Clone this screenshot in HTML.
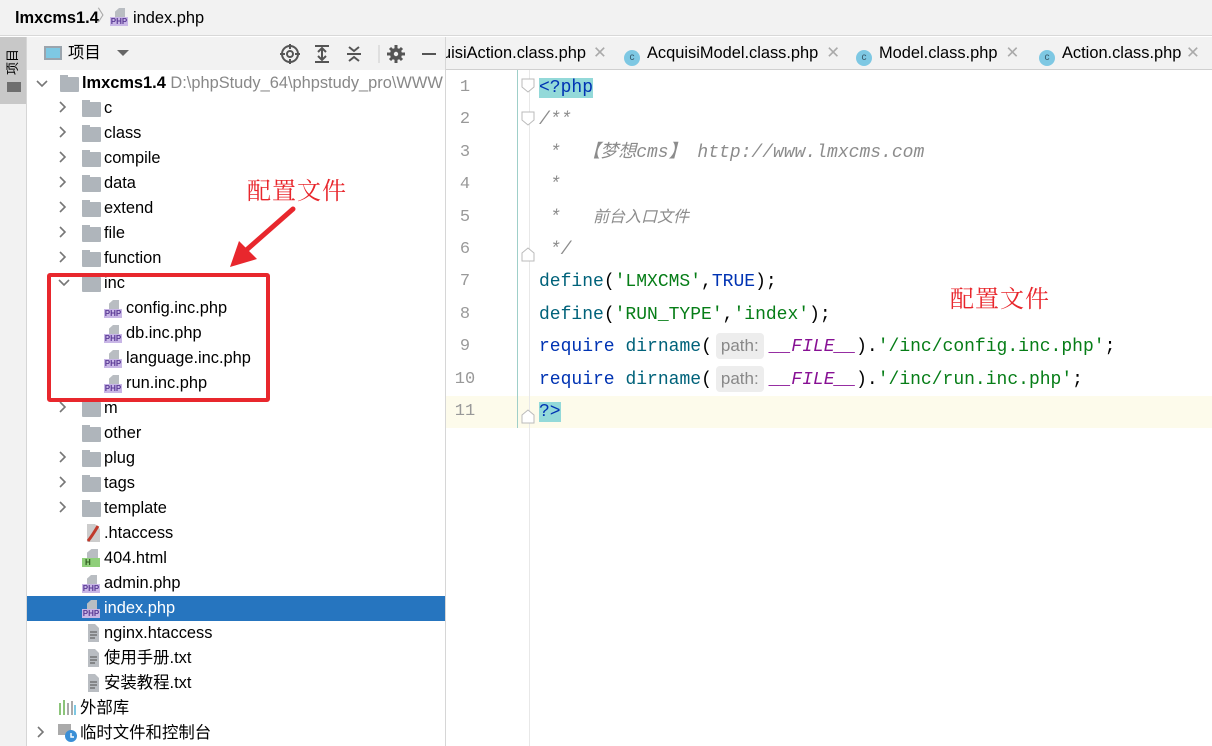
<!DOCTYPE html>
<html><head><meta charset="utf-8"><style>
*{margin:0;padding:0;box-sizing:border-box}
body{width:1212px;height:746px;overflow:hidden;background:#fff;font-family:"Liberation Sans","Noto Sans CJK SC",sans-serif;position:relative;color:#000}
.a{position:absolute;white-space:nowrap}
.t{font-size:16.4px;line-height:25px;height:25px}
.fd{position:absolute;width:19px;height:15px;background:#afb5bb;border-radius:1px}
.fd:before{content:"";position:absolute;left:0;top:-2px;width:8px;height:3px;background:#afb5bb}
.php{position:absolute;width:18px;height:18px}
.php .pg{position:absolute;left:5px;top:0;width:10px;height:9px;background:#b9bdc2;clip-path:polygon(40% 0,100% 0,100% 100%,0 100%,0 40%)}
.php .pl{position:absolute;left:0;top:9px;width:18px;height:9px;background:#c8b6e6;color:#5b3b96;font:bold 8px/9px "Liberation Sans",sans-serif;text-align:center}
.code{position:absolute;left:539px;font-family:"Liberation Mono",monospace;font-size:18px;line-height:32px;height:32px;white-space:pre}
.ln{position:absolute;left:445px;width:40px;text-align:center;font-family:"Liberation Mono",monospace;font-size:17px;color:#999;line-height:32px}
.kw{color:#0033b3}.fn{color:#00627a}.st{color:#067d17}.cm{color:#8c8c8c;font-style:italic}.mc{color:#871094;font-style:italic}
.hint{display:inline-block;background:#ededed;color:#888;font-family:"Liberation Sans",sans-serif;font-size:17px;line-height:26px;padding:0 5px;border-radius:4px;margin:0 6px 0 4px}
.tab{position:absolute;top:36px;height:34px;line-height:34px;font-size:16.4px;white-space:nowrap}
.ci{display:inline-block;width:16px;height:16px;border-radius:50%;background:#7ec8e3;color:#35586a;font-size:10px;line-height:16px;text-align:center;vertical-align:-2px;margin-right:7px}
.x{color:#aaa;margin-left:8px}
</style></head><body>
<div class="a" style="left:0;top:0;width:1212px;height:36px;background:#f2f2f2;border-bottom:1px solid #d8d8d8"></div>
<div class="a" style="left:15px;top:7px;font-size:16.4px;font-weight:bold;line-height:22px">lmxcms1.4</div>
<div class="a" style="left:97px;top:6px;font-size:16px;color:#aaa;line-height:22px">〉</div>
<div class="php" style="left:110px;top:8px"><div class="pg"></div><div class="pl">PHP</div></div>
<div class="a" style="left:133px;top:7px;font-size:16.4px;line-height:22px">index.php</div>
<div class="a" style="left:0;top:37px;width:27px;height:709px;background:#f2f2f2;border-right:1px solid #d6d6d6"></div>
<div class="a" style="left:0;top:37px;width:26px;height:67px;background:#c8c8c8"></div>
<div class="a" style="font-size:13px;line-height:14px;transform:rotate(-90deg);transform-origin:center;width:28px;left:-1px;top:54px">项目</div>
<div class="a" style="left:7px;top:82px;width:14px;height:10px;background:#6e6e6e"></div>
<div class="a" style="left:27px;top:37px;width:418px;height:33px;background:#f2f2f2"></div>
<div class="a" style="left:44px;top:46px;width:18px;height:14px;border:2px solid #9aa4ad;background:#7ec8e3"></div>
<div class="a" style="left:68px;top:41px;font-size:16.4px;line-height:24px">项目</div>
<div class="a" style="left:117px;top:50px;width:0;height:0;border-left:6px solid transparent;border-right:6px solid transparent;border-top:6px solid #666"></div>
<svg class="a" style="left:279px;top:43px" width="160" height="22" viewBox="0 0 160 22" fill="none" stroke="#555" stroke-width="2">
<circle cx="11" cy="11" r="8"/><circle cx="11" cy="11" r="3"/><path d="M11 1v5M11 16v5M1 11h5M16 11h5"/>
<path d="M36 3h14M36 19h14M43 6v10M39 9l4-4 4 4M39 13l4 4 4-4"/>
<path d="M68 11h14M70 4l5 4 5-4M70 18l5-4 5 4"/>
<line x1="100" y1="2" x2="100" y2="20" stroke="#ccc" stroke-width="1"/>
<circle cx="117" cy="11" r="6" fill="#555" stroke="none"/><path d="M117 2v18M108 11h18M111 5l12 12M123 5l-12 12" stroke-width="3"/><circle cx="117" cy="11" r="2.2" fill="#f2f2f2" stroke="none"/>
<path d="M143 11h14"/>
</svg>
<div class="a" style="left:445px;top:37px;width:1px;height:709px;background:#d6d6d6"></div>
<div class="a" style="left:27px;top:596px;width:418px;height:25px;background:#2675bf"></div>
<svg class="a" style="left:34px;top:74px" width="60" height="670" fill="none" stroke="#777" stroke-width="1.6">
<path d="M3 7l5 5 5-5"/>
<path d="M26 28l5 5-5 5M26 53l5 5-5 5M26 78l5 5-5 5M26 103l5 5-5 5M26 128l5 5-5 5M26 153l5 5-5 5M26 178l5 5-5 5"/>
<path d="M25 206l5 5 5-5"/>
<path d="M26 328l5 5-5 5M26 378l5 5-5 5M26 403l5 5-5 5M26 428l5 5-5 5"/>
<path d="M4 653l5 5-5 5"/>
</svg>
<div class="fd" style="left:60px;top:77px"></div>
<div class="a t" style="left:82px;top:71px"><b>lmxcms1.4</b> <span style="color:#888">D:\phpStudy_64\phpstudy_pro\WWW</span></div>
<div class="fd" style="left:82px;top:102px"></div><div class="a t" style="left:104px;top:96px">c</div>
<div class="fd" style="left:82px;top:127px"></div><div class="a t" style="left:104px;top:121px">class</div>
<div class="fd" style="left:82px;top:152px"></div><div class="a t" style="left:104px;top:146px">compile</div>
<div class="fd" style="left:82px;top:177px"></div><div class="a t" style="left:104px;top:171px">data</div>
<div class="fd" style="left:82px;top:202px"></div><div class="a t" style="left:104px;top:196px">extend</div>
<div class="fd" style="left:82px;top:227px"></div><div class="a t" style="left:104px;top:221px">file</div>
<div class="fd" style="left:82px;top:252px"></div><div class="a t" style="left:104px;top:246px">function</div>
<div class="fd" style="left:82px;top:277px"></div><div class="a t" style="left:104px;top:271px">inc</div>
<div class="php" style="left:104px;top:300px"><div class="pg"></div><div class="pl">PHP</div></div><div class="a t" style="left:126px;top:296px">config.inc.php</div>
<div class="php" style="left:104px;top:325px"><div class="pg"></div><div class="pl">PHP</div></div><div class="a t" style="left:126px;top:321px">db.inc.php</div>
<div class="php" style="left:104px;top:350px"><div class="pg"></div><div class="pl">PHP</div></div><div class="a t" style="left:126px;top:346px">language.inc.php</div>
<div class="php" style="left:104px;top:375px"><div class="pg"></div><div class="pl">PHP</div></div><div class="a t" style="left:126px;top:371px">run.inc.php</div>
<div class="fd" style="left:82px;top:402px"></div><div class="a t" style="left:104px;top:396px">m</div>
<div class="fd" style="left:82px;top:427px"></div><div class="a t" style="left:104px;top:421px">other</div>
<div class="fd" style="left:82px;top:452px"></div><div class="a t" style="left:104px;top:446px">plug</div>
<div class="fd" style="left:82px;top:477px"></div><div class="a t" style="left:104px;top:471px">tags</div>
<div class="fd" style="left:82px;top:502px"></div><div class="a t" style="left:104px;top:496px">template</div>
<svg class="a" style="left:84px;top:524px" width="16" height="18"><path d="M3 0h8l5 5v13H3z" fill="#ccc"/><path d="M4 17c4-5 7-10 10-15" stroke="#c0392b" stroke-width="3"/></svg><div class="a t" style="left:104px;top:521px">.htaccess</div>
<div class="a" style="left:87px;top:549px;width:11px;height:9px;background:#b9bdc2;clip-path:polygon(40% 0,100% 0,100% 100%,0 100%,0 40%)"></div><div class="a" style="left:82px;top:558px;width:18px;height:9px;background:#8fcf7a;color:#2d5a1e;font:bold 8px/9px sans-serif;padding-left:3px">H</div><div class="a t" style="left:104px;top:546px">404.html</div>
<div class="php" style="left:82px;top:575px"><div class="pg"></div><div class="pl">PHP</div></div><div class="a t" style="left:104px;top:571px">admin.php</div>
<div class="php" style="left:82px;top:600px"><div class="pg"></div><div class="pl">PHP</div></div><div class="a t" style="left:104px;top:596px;color:#fff">index.php</div>
<svg class="a" style="left:84px;top:624px" width="16" height="70" fill="#b9bdc2"><path d="M4 0h7l4 4v14H4z"/><path d="M4 25h7l4 4v14H4z"/><path d="M4 50h7l4 4v14H4z"/><g stroke="#666" stroke-width="1.3"><path d="M6 8h7M6 11h7M6 14h5M6 33h7M6 36h7M6 39h5M6 58h7M6 61h7M6 64h5"/></g></svg>
<div class="a t" style="left:104px;top:621px">nginx.htaccess</div>
<div class="a t" style="left:104px;top:646px">使用手册.txt</div>
<div class="a t" style="left:104px;top:671px">安装教程.txt</div>
<svg class="a" style="left:59px;top:700px" width="18" height="16"><g fill="#8cc47a"><rect x="0" y="3" width="2" height="12"/><rect x="4" y="0" width="2" height="15"/></g><g fill="#aaa"><rect x="8" y="3" width="2" height="12"/><rect x="12" y="1" width="2" height="14"/></g><rect x="15" y="5" width="2" height="10" fill="#7ec8e3"/></svg>
<div class="a t" style="left:80px;top:696px">外部库</div>
<svg class="a" style="left:58px;top:723px" width="20" height="20"><rect x="0" y="1" width="13" height="11" fill="#aaa"/><circle cx="13" cy="13" r="6" fill="#3a8fd6"/><path d="M13 10v4h3" stroke="#fff" stroke-width="1.4" fill="none"/></svg>
<div class="a t" style="left:80px;top:721px">临时文件和控制台</div>
<div class="a" style="left:247px;top:172px;font-size:24px;color:#e8272d;line-height:34px;font-family:'Noto Serif CJK SC','Noto Sans CJK SC',serif;letter-spacing:1px">配置文件</div>
<svg class="a" style="left:225px;top:205px" width="75" height="65"><path d="M68 4L18 48" stroke="#e8272d" stroke-width="5" stroke-linecap="round"/><path d="M5 62l9-26 18 18z" fill="#e8272d"/></svg>
<div class="a" style="left:47px;top:273px;width:223px;height:129px;border:4px solid #e8272d;border-radius:3px"></div>
<div class="a" style="left:446px;top:37px;width:766px;height:33px;background:#f2f2f2;border-bottom:1px solid #d0d0d0"></div>
<div class="tab" style="left:446px;width:141px;overflow:hidden"><span style="margin-left:-4px">uisiAction.class.php</span></div>
<div class="tab x" style="left:593px;margin:0">✕</div>
<div class="tab" style="left:624px"><span class="ci">c</span>AcquisiModel.class.php<span class="x">✕</span></div>
<div class="tab" style="left:856px"><span class="ci">c</span>Model.class.php<span class="x">✕</span></div>
<div class="tab" style="left:1039px;width:142px;overflow:hidden"><span class="ci">c</span>Action.class.php</div>
<div class="tab x" style="left:1186px;margin:0">✕</div>
<div class="a" style="left:446px;top:396px;width:766px;height:32px;background:#fdfbeb"></div>
<div class="a" style="left:517px;top:70px;width:1px;height:358px;background:#9fcfc9"></div>
<div class="a" style="left:529px;top:70px;width:1px;height:676px;background:#e8e8e8"></div>
<div class="ln" style="top:72px">1</div><div class="ln" style="top:104px">2</div><div class="ln" style="top:137px">3</div><div class="ln" style="top:169px">4</div><div class="ln" style="top:202px">5</div><div class="ln" style="top:234px">6</div><div class="ln" style="top:266px">7</div><div class="ln" style="top:299px">8</div><div class="ln" style="top:331px">9</div><div class="ln" style="top:364px">10</div><div class="ln" style="top:396px">11</div>
<svg class="a" style="left:521px;top:78px" width="16" height="350" fill="#fff" stroke="#bbb"><path d="M1 1h12v8l-6 5-6-5z"/><path d="M1 34h12v8l-6 5-6-5z"/><path d="M1 175l6-5 6 5v8H1z"/><path d="M1 337l6-5 6 5v8H1z"/></svg>
<div class="code" style="top:72px"><span class="kw" style="background:#93d9d9">&lt;?php</span></div>
<div class="code" style="top:104px"><span class="cm">/**</span></div>
<div class="code" style="top:137px"><span class="cm"> *  【梦想cms】 http://www.lmxcms.com</span></div>
<div class="code" style="top:169px"><span class="cm"> *</span></div>
<div class="code" style="top:202px"><span class="cm"> *   <span style="font-size:16px">前台入口文件</span></span></div>
<div class="code" style="top:234px"><span class="cm"> */</span></div>
<div class="code" style="top:266px"><span class="fn">define</span>(<span class="st">'LMXCMS'</span>,<span class="kw">TRUE</span>);</div>
<div class="code" style="top:299px"><span class="fn">define</span>(<span class="st">'RUN_TYPE'</span>,<span class="st">'index'</span>);</div>
<div class="code" style="top:331px"><span class="kw">require</span> <span class="fn">dirname</span>(<span class="hint">path:</span><span class="mc">__FILE__</span>).<span class="st">'/inc/config.inc.php'</span>;</div>
<div class="code" style="top:364px"><span class="kw">require</span> <span class="fn">dirname</span>(<span class="hint">path:</span><span class="mc">__FILE__</span>).<span class="st">'/inc/run.inc.php'</span>;</div>
<div class="code" style="top:396px"><span class="kw" style="background:#93d9d9">?&gt;</span></div>
<div class="a" style="left:950px;top:280px;font-size:24px;color:#e8272d;line-height:34px;font-family:'Noto Serif CJK SC','Noto Sans CJK SC',serif;letter-spacing:1px">配置文件</div>
</body></html>
